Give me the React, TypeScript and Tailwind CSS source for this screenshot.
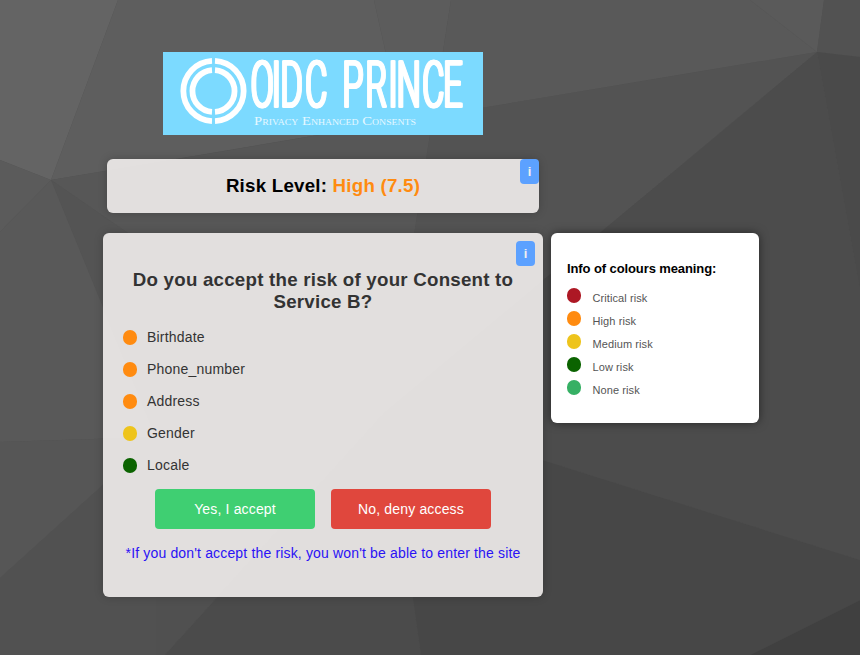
const ORANGE = "bg-[#ff8b10]";
const YELLOW = "bg-[#eec41c]";
const GREEN = "bg-[#0b6300]";

const claims = [
  { label: "Birthdate", color: ORANGE },
  { label: "Phone_number", color: ORANGE },
  { label: "Address", color: ORANGE },
  { label: "Gender", color: YELLOW },
  { label: "Locale", color: GREEN },
];

const legend = [
  { label: "Critical risk", color: "bg-[#ad1824]" },
  { label: "High risk", color: ORANGE },
  { label: "Medium risk", color: YELLOW },
  { label: "Low risk", color: GREEN },
  { label: "None risk", color: "bg-[#36b064]" },
];

const facets: [string, string][] = [
  ["0,0 118,0 51,180 0,160", "#646464"],
  ["0,160 51,180 0,232", "#5b5b5b"],
  ["118,0 374,0 401,121 51,180", "#5e5e5e"],
  ["374,0 451,0 433,116 401,121", "#5c5c5c"],
  ["451,0 750,0 817,52 433,116", "#595959"],
  ["750,0 824,0 817,52", "#5a5a5a"],
  ["824,0 860,0 860,57 817,52", "#525252"],
  ["51,180 433,116 386,411", "#575757"],
  ["433,116 817,52 386,411", "#535353"],
  ["817,52 860,57 860,290", "#4a4a4a"],
  ["817,52 860,290 860,560 386,411", "#4c4c4c"],
  ["51,180 386,411 156,437", "#545454"],
  ["0,232 51,180 156,437 0,442", "#595959"],
  ["0,442 156,437 0,578", "#565656"],
  ["0,578 156,437 156,655 0,655", "#515151"],
  ["156,437 386,411 165,655 156,655", "#505050"],
  ["386,411 421,655 165,655", "#4b4b4b"],
  ["386,411 860,560 860,600 750,655 421,655", "#474747"],
  ["860,600 860,655 750,655", "#404040"],
];

function Backdrop() {
  return (
    <svg className="absolute inset-0 -z-10 bg-[#525252]" width="860" height="655" viewBox="0 0 860 655">
      {facets.map(([points, fill]) => (
        <polygon key={points} points={points} fill={fill} />
      ))}
    </svg>
  );
}

// Left edge of each wordmark glyph; the blank between the two words has its own slot.
const SQUEEZE = 0.53;
const glyphX = [87.8, 108.8, 117.6, 142.2, 165, 179.6, 202.4, 225.4, 233.7, 259.2, 280.2]
  .map((x) => (x / SQUEEZE).toFixed(1))
  .join(" ");

function Logo() {
  return (
    <svg className="h-[83px] w-[320px] overflow-visible bg-[#7cdaff]" viewBox="0 0 320 83">
      <g fill="none" stroke="#fff" strokeWidth="5.8">
        <path d="M49 8.84A30.2 30.2 0 0 0 49 69.16" />
        <path d="M52 8.84A30.2 30.2 0 0 1 52 69.16" />
        <path d="M49 18.05A21 21 0 0 0 49 59.95" />
        <path d="M52 18.05A21 21 0 0 1 52 59.95" />
      </g>
      <g className="[filter:drop-shadow(1px_0_0_#fff)_drop-shadow(-1px_0_0_#fff)]">
        <text
          transform={`translate(0 55.3) scale(${SQUEEZE} 1)`}
          x={glyphX}
          fontFamily="Roboto, sans-serif"
          fontWeight="300"
          fontSize="64"
          fill="#fff"
          stroke="#fff"
          strokeWidth="1.6"
          strokeLinejoin="round"
        >
          OIDC PRINCE
        </text>
      </g>
      <text
        x="91"
        y="72.5"
        fontFamily="'Liberation Serif', serif"
        fontSize="12"
        fill="#e6f8ff"
        textLength="162"
        lengthAdjust="spacingAndGlyphs"
        style={{ fontVariant: "small-caps" }}
      >
        Privacy Enhanced Consents
      </text>
    </svg>
  );
}

function InfoButton() {
  return (
    <button className="flex h-[25px] w-[19px] items-center justify-center rounded-[4px] bg-[#5ca1ff] text-[13px] font-bold text-[#f0f0f0]">
      i
    </button>
  );
}

export default function App() {
  return (
    <div className="relative isolate flex h-[655px] w-[860px] items-start gap-2 overflow-hidden pl-[103px] font-['Liberation_Sans',Arial,sans-serif]">
      <Backdrop />
      <main className="flex w-[440px] flex-col items-center pt-[52px]">
        <Logo />
        <section className="relative mt-6 h-[54px] w-[432px] rounded-md bg-[#f2eeed]/90 pt-4 text-center shadow-[0_0_10px_rgba(0,0,0,0.2)]">
          <h1 className="text-[18.72px] leading-[22px] font-bold tracking-[0.23px] text-black">
            Risk Level: <span className="text-[#ff8b10]">High (7.5)</span>
          </h1>
          <div className="absolute top-0 right-0">
            <InfoButton />
          </div>
        </section>
        <section className="relative mt-5 h-[364px] w-full rounded-md bg-[#f2eeed]/90 px-5 pt-9 shadow-[0_0_10px_rgba(0,0,0,0.2)]">
          <div className="absolute top-2 right-2">
            <InfoButton />
          </div>
          <h2 className="text-center text-[18.72px] leading-[22px] font-bold tracking-[0.23px] whitespace-nowrap text-[#333]">
            Do you accept the risk of your Consent to
            <br />
            Service B?
          </h2>
          <ul className="mt-2">
            {claims.map((c) => (
              <li key={c.label} className="flex h-8 items-center gap-[10px] text-[14px] tracking-[0.2px] text-[#333]">
                <span className={`h-[15px] w-[14px] rounded-full ${c.color}`} />
                {c.label}
              </li>
            ))}
          </ul>
          <div className="mt-2 flex justify-center gap-4">
            <button className="h-10 w-40 rounded bg-[#3fcf72] text-[14px] tracking-[0.16px] text-white">Yes, I accept</button>
            <button className="h-10 w-40 rounded bg-[#e0473d] text-[14px] tracking-[0.16px] text-white">No, deny access</button>
          </div>
          <p className="mt-4 text-center text-[14px] leading-4 tracking-[0.16px] whitespace-nowrap text-[#2a12f5]">
            *If you don't accept the risk, you won't be able to enter the site
          </p>
        </section>
      </main>
      <aside className="mt-[233px] h-[190px] w-[208px] rounded-md bg-white px-4 pt-7 shadow-[0_0_10px_rgba(0,0,0,0.5)]">
        <h3 className="text-[13px] leading-4 font-bold tracking-[-0.1px] text-black">Info of colours meaning:</h3>
        <ul className="mt-[11px]">
          {legend.map((l) => (
            <li key={l.label} className="flex h-[23px] items-start text-[11px] leading-[13px] tracking-[0.09px] text-[#555]">
              <span className={`mr-[11.5px] h-[14.5px] w-[14px] rounded-full ${l.color}`} />
              <span className="pt-[4px]">{l.label}</span>
            </li>
          ))}
        </ul>
      </aside>
    </div>
  );
}
